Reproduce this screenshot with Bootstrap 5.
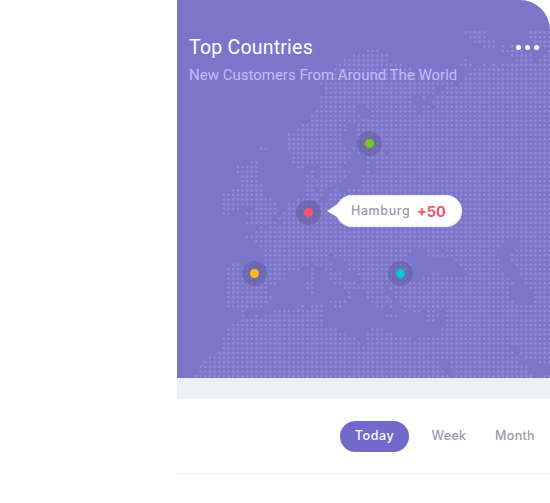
<!DOCTYPE html>
<html lang="en">
<head>
<meta charset="utf-8">
<meta name="viewport" content="width=device-width, initial-scale=1">
<title>Top Countries</title>
<link href="https://cdn.jsdelivr.net/npm/bootstrap@5.3.0/dist/css/bootstrap.min.css" rel="stylesheet">
<style>
body{background:#fff;height:503px;font-family:Roboto,sans-serif}
.panel{width:373px}
.map-area{height:378px;background:#7c76cb;border-top-right-radius:30px;padding:36px 11px 0 12px}
.map-dots{left:0;top:0}
.heading{font-size:19.5px;line-height:24px;color:#fff;font-weight:400;letter-spacing:.22px}
.subheading{font-size:15px;line-height:18px;color:#c3bcf8;margin-top:6px;white-space:nowrap}
.more{gap:4px;padding:9px 0 0}
.more span{width:5px;height:5px;border-radius:50%;background:#fff}
.pin{width:25px;height:25px;background:rgba(95,90,150,.5)}
.pin::after{content:"";width:9px;height:9px;border-radius:50%;background:var(--pin)}
.pin-green{--pin:#74cc1a;left:180px;top:131px}
.pin-red{--pin:#f6546e;left:119px;top:200px}
.pin-amber{--pin:#ffb822;left:65px;top:261px}
.pin-cyan{--pin:#00c5dc;left:211px;top:261px}
.callout{left:159px;top:195px;width:126px;height:32px;padding-left:15px;box-shadow:inset 0 0 0 1px rgba(225,225,240,.6);font-family:Inter,sans-serif}
.callout-tip{left:-9px;top:6px}
.city{width:66px;font-size:12.5px;font-weight:500;color:#9899a8;letter-spacing:.6px;line-height:32px}
.gain{font-size:14.5px;font-weight:700;color:#f4516c;line-height:34px}
.strip{height:21px;background:#eff0f6;border-bottom:1px solid #f5f6fa}
.range-bar{height:75px;padding-left:163px;border-bottom:1px solid #ebedf2;font-family:Inter,sans-serif}
.range-bar .nav-link{height:31px;padding:0;line-height:30px;font-size:12.5px;font-weight:500;color:#9c9aab;text-align:center;letter-spacing:.3px}
.range-bar .nav-link.active{background:#716aca;color:#fff;letter-spacing:.6px}
.w-today{width:69px}
.w-week{width:80px}
.w-month{width:52px}
</style>
<script src="https://cdn.jsdelivr.net/npm/bootstrap@5.3.0/dist/js/bootstrap.bundle.min.js"></script>
</head>
<body class="d-flex justify-content-end overflow-hidden">
<main class="panel flex-shrink-0">
  <section class="map-area position-relative overflow-hidden">
    <svg class="map-dots position-absolute" width="373" height="378" viewBox="177 0 373 378" aria-hidden="true"><path id="dots" fill="none" stroke="#d2cdff" stroke-opacity=".24" stroke-width="2.7" stroke-linecap="round"/></svg>
    <header class="d-flex justify-content-between position-relative">
      <div>
        <h1 class="heading m-0">Top Countries</h1>
        <p class="subheading mb-0">New Customers From Around The World</p>
      </div>
      <div class="more d-flex"><span></span><span></span><span></span></div>
    </header>
    <span class="pin pin-green position-absolute rounded-circle d-flex align-items-center justify-content-center"></span>
    <span class="pin pin-red position-absolute rounded-circle d-flex align-items-center justify-content-center"></span>
    <span class="pin pin-amber position-absolute rounded-circle d-flex align-items-center justify-content-center"></span>
    <span class="pin pin-cyan position-absolute rounded-circle d-flex align-items-center justify-content-center"></span>
    <div class="callout position-absolute bg-white rounded-pill d-flex">
      <svg class="callout-tip position-absolute" width="18" height="20" viewBox="0 0 18 20"><path d="M0 10L9 4Q12 1 17 0V20Q12 18 10 16Z" fill="#fff"/></svg>
      <span class="city">Hamburg</span><span class="gain">+50</span>
    </div>
  </section>
  <div class="strip"></div>
  <nav class="range-bar nav align-items-center flex-nowrap">
    <a class="nav-link active rounded-pill w-today" href="#">Today</a>
    <a class="nav-link w-week" href="#">Week</a>
    <a class="nav-link w-month" href="#">Month</a>
  </nav>
</main>
<script>
// Land dots: one entry per row, each holding "from-to" spans of x
const rows = `466-485 531-550
470-485 531-550
475-494 535-550
484-494 503 512-521 540-550
368-378 503-522 550
354-387 512-531 545-550
345-387 466 516-531 540-550
340-401 461-470 484 494 503-550
336-410 475-550
331-415 438-442 470-550
331-438 466-550
322-452 461-550
326-433 447-550
326-433 442-550
322-410 423 437-550
322-410 433-550
322-354 368-415 423-428 437-550
317-354 373-415 423-550
312-359 373-550
312-354 364-550
303-345 359-550
298-345 359-550
289-340 359-550
289-340 359-550
289-340 359-550
261-266 289-345 354 359-550
294-350 359-382 391-550
294-350 369-550
252-256 294-345 368 377-550
238-256 298-303 322-340 368 377-550
238-256 312 322-350 368 377-550
242-256 308-312 322-345 364-368 373-550
242-256 308-317 322-340 364-550
242-261 308-331 364-550
233-261 308-312 322 336 350-550
224-229 233-243 247-261 308-322 331-550
224-229 233-243 247-271 297-317 331-550
224-243 247-275 288-550
224-238 257-275 288-550
224-229 247-275 283-550
252-271 279-550
247-275 283-550
261 270-550
257-550
247-252 257-550
257-447 452-503 521-550
261-443 447-498 521-550
266-325 331-410 428-437 447-494 517-550
266-325 335-405 428-494 512-550
266-325 345-405 457-498 512-550
233-238 266-307 317-331 349-410 461-498 517-550
229-298 312 326-331 349-405 466-498 521-550
229-284 312 331-340 359-401 433-437 470-503 521-550
229-284 312 331-340 363-405 423-447 452-508 526-550
229-275 308-312 335-354 363-512 526-550
229-266 308-312 345-354 359-382 391-508 531-550
229-266 312 349 368-382 396-508 535-550
229-271 349 368-387 396-508 535-550
229-266 331-345 373-391 401-512 535-550
229-261 303 312-321 335-340 377-382 391 405-550
243 275-321 405 414-419 428-433 447-550
243 257 266-321 387-396 428-437 447-550
243-321 428-433 447-550
233-321 447-550
229-335 373-382 443-550
229-345 368-391 443-550
224-354 368-410 419-550
224-359 368-550
224-508 521-550
219-512 521-550
210-447 452-517 526-550
205-438 452-517 540-550
201-438 452-526
201-443 457-526
196-447 457-531 545-550`.split("\n");
const stepX = 4.65, stepY = 4.645;
let d = "";
rows.forEach((row, j) => {
  const y = (32.4 + j * stepY).toFixed(2);
  row.split(" ").forEach(span => {
    const ends = span.split("-").map(v => Math.round((v - 196) / stepX));
    for (let i = ends[0]; i <= ends[ends.length - 1]; i++) d += `M${(196 + i * stepX).toFixed(2)} ${y}h.01`;
  });
});
document.getElementById("dots").setAttribute("d", d);
</script>
</body>
</html>
